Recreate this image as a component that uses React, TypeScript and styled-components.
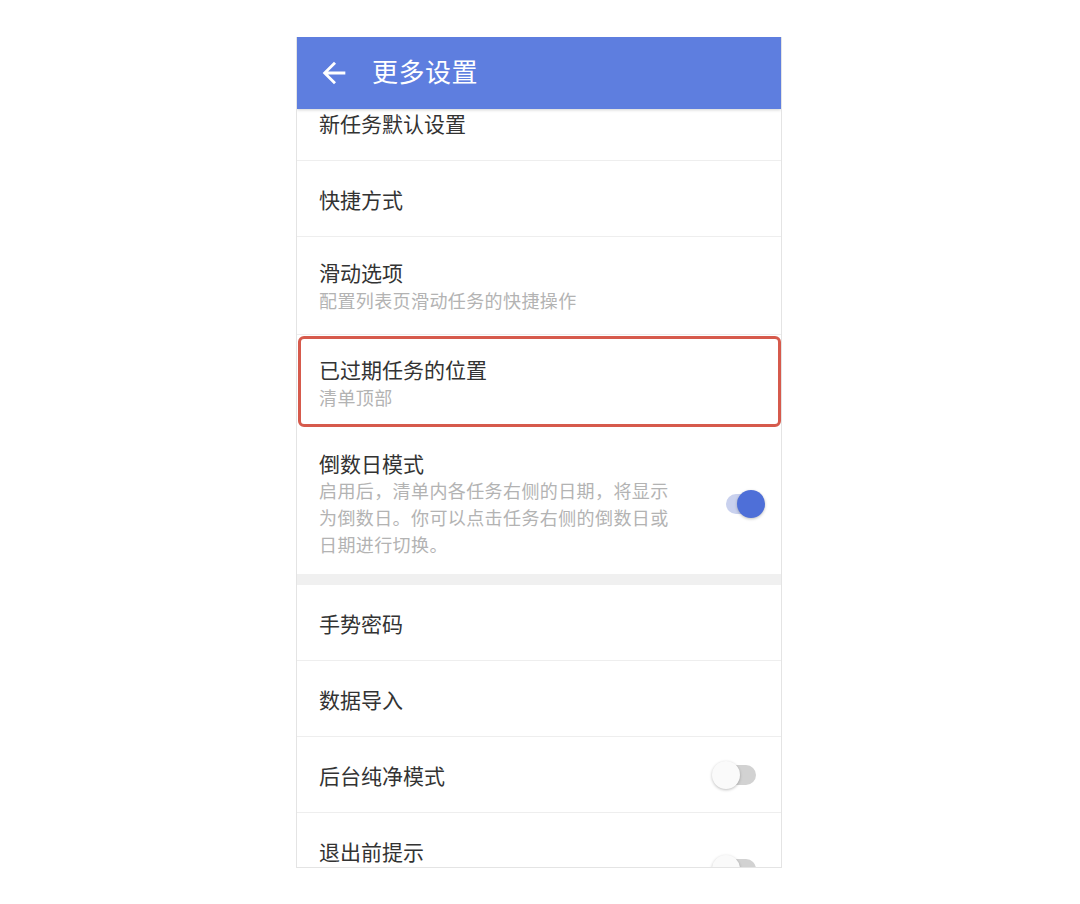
import React from "react";
import styled, { createGlobalStyle } from "styled-components";

const GlobalStyle = createGlobalStyle`
    html, body {
        margin: 0;
        padding: 0;
        background: #FFFFFF;
        font-family: "Noto Sans CJK SC", "Noto Sans", sans-serif;
    }
`;

const Page = styled.div`
    display: flex;
    justify-content: center;
    padding-top: 37px;
    padding-right: 2px;
`;

const Phone = styled.div`
    width: 484px;
    height: 830px;
    border: 1px solid #E4E4E4;
    border-top: none;
    display: flex;
    flex-direction: column;
    overflow: hidden;
    background: #FFFFFF;
`;

const Header = styled.div`
    flex: none;
    height: 72px;
    display: flex;
    align-items: center;
    gap: 21px;
    padding-left: 20px;
    background-color: #5E7EDF;
    box-shadow: 0 1px 3px rgba(0, 0, 0, 0.18);
    position: relative;
    z-index: 2;
`;

const HeaderTitle = styled.span`
    color: #FFFFFF;
    font-size: 26px;
    letter-spacing: 0.5px;
    margin-bottom: 5px;
`;

const Scroll = styled.div`
    flex: 1;
    overflow: hidden;
`;

const List = styled.div`
    margin-top: -24px;
`;

type Kind = "single" | "tall" | "marked" | "long";

const pads: Record<Kind, string> = {
    single: "24px 16px 23px 22px",
    tall: "21px 16px 20px 22px",
    marked: "20px 16px 16px 22px",
    long: "22px 16px 16px 22px",
};

const Row = styled.div<{ $kind?: Kind; $last?: boolean }>`
    position: relative;
    display: flex;
    align-items: center;
    justify-content: space-between;
    padding: ${p => pads[p.$kind ?? "single"]};
    border-bottom: ${p => (p.$last ? "none" : "1px solid #EEEEEE")};

    ${p => p.$kind === "marked" && `
        &::after {
            content: "";
            position: absolute;
            top: 1px;
            bottom: 0;
            left: 1px;
            right: 0;
            border: 3px solid #D65A4C;
            border-radius: 6px;
            pointer-events: none;
        }
    `}
`;

const Texts = styled.div`
    display: flex;
    flex-direction: column;
`;

const Title = styled.div`
    font-size: 21px;
    line-height: 28px;
    color: #333333;
`;

const Sub = styled.div`
    font-size: 18px;
    line-height: 28px;
    letter-spacing: 0.4px;
    color: #B3B3B3;
`;

const Desc = styled.div`
    font-size: 18px;
    line-height: 27px;
    letter-spacing: 0.4px;
    color: #B3B3B3;
`;

const Gap = styled.div`
    height: 11px;
    background: #F0F0F0;
`;

// $drop: the switch is mid-animation in the last row, sitting a bit low
const Switch = styled.div<{ $on?: boolean; $drop?: boolean }>`
    position: relative;
    width: 44px;
    height: 28px;
    flex: none;
    margin-right: ${p => (p.$on ? "0" : "9px")};
    transform: ${p => (p.$drop ? "translateY(18px)" : "none")};

    &::before {
        content: "";
        position: absolute;
        left: ${p => (p.$on ? "5px" : "14px")};
        right: 0;
        top: 4px;
        height: 20px;
        border-radius: 10px;
        background: ${p => (p.$on ? "#C9D1EE" : "#D2D2D2")};
    }

    &::after {
        content: "";
        position: absolute;
        top: 0;
        left: ${p => (p.$on ? "16px" : "0")};
        width: 28px;
        height: 28px;
        border-radius: 50%;
        background: ${p => (p.$on ? "#4E6FD8" : "#FAFAFA")};
        box-shadow: 0 1px 3px rgba(0, 0, 0, 0.25);
    }
`;

const BackArrow = () => (
    <svg width="34" height="34" viewBox="0 0 24 24" fill="#FFFFFF">
        <path d="M20 11H7.83l5.59-5.59L12 4l-8 8 8 8 1.41-1.41L7.83 13H20v-2z" />
    </svg>
);

const App = () => {
    return (
        <>
            <GlobalStyle />
            <Page>
                <Phone>
                    <Header>
                        <BackArrow />
                        <HeaderTitle>更多设置</HeaderTitle>
                    </Header>
                    <Scroll>
                        <List>
                            <Row><Title>新任务默认设置</Title></Row>
                            <Row><Title>快捷方式</Title></Row>
                            <Row $kind="tall">
                                <Texts>
                                    <Title>滑动选项</Title>
                                    <Sub>配置列表页滑动任务的快捷操作</Sub>
                                </Texts>
                            </Row>
                            <Row $kind="marked" $last>
                                <Texts>
                                    <Title>已过期任务的位置</Title>
                                    <Sub>清单顶部</Sub>
                                </Texts>
                            </Row>
                            <Row $kind="long" $last>
                                <Texts>
                                    <Title>倒数日模式</Title>
                                    <Desc>
                                        启用后，清单内各任务右侧的日期，将显示<br />
                                        为倒数日。你可以点击任务右侧的倒数日或<br />
                                        日期进行切换。
                                    </Desc>
                                </Texts>
                                <Switch $on />
                            </Row>
                            <Gap />
                            <Row><Title>手势密码</Title></Row>
                            <Row><Title>数据导入</Title></Row>
                            <Row>
                                <Title>后台纯净模式</Title>
                                <Switch />
                            </Row>
                            <Row>
                                <Title>退出前提示</Title>
                                <Switch $drop />
                            </Row>
                        </List>
                    </Scroll>
                </Phone>
            </Page>
        </>
    );
};

export default App;
